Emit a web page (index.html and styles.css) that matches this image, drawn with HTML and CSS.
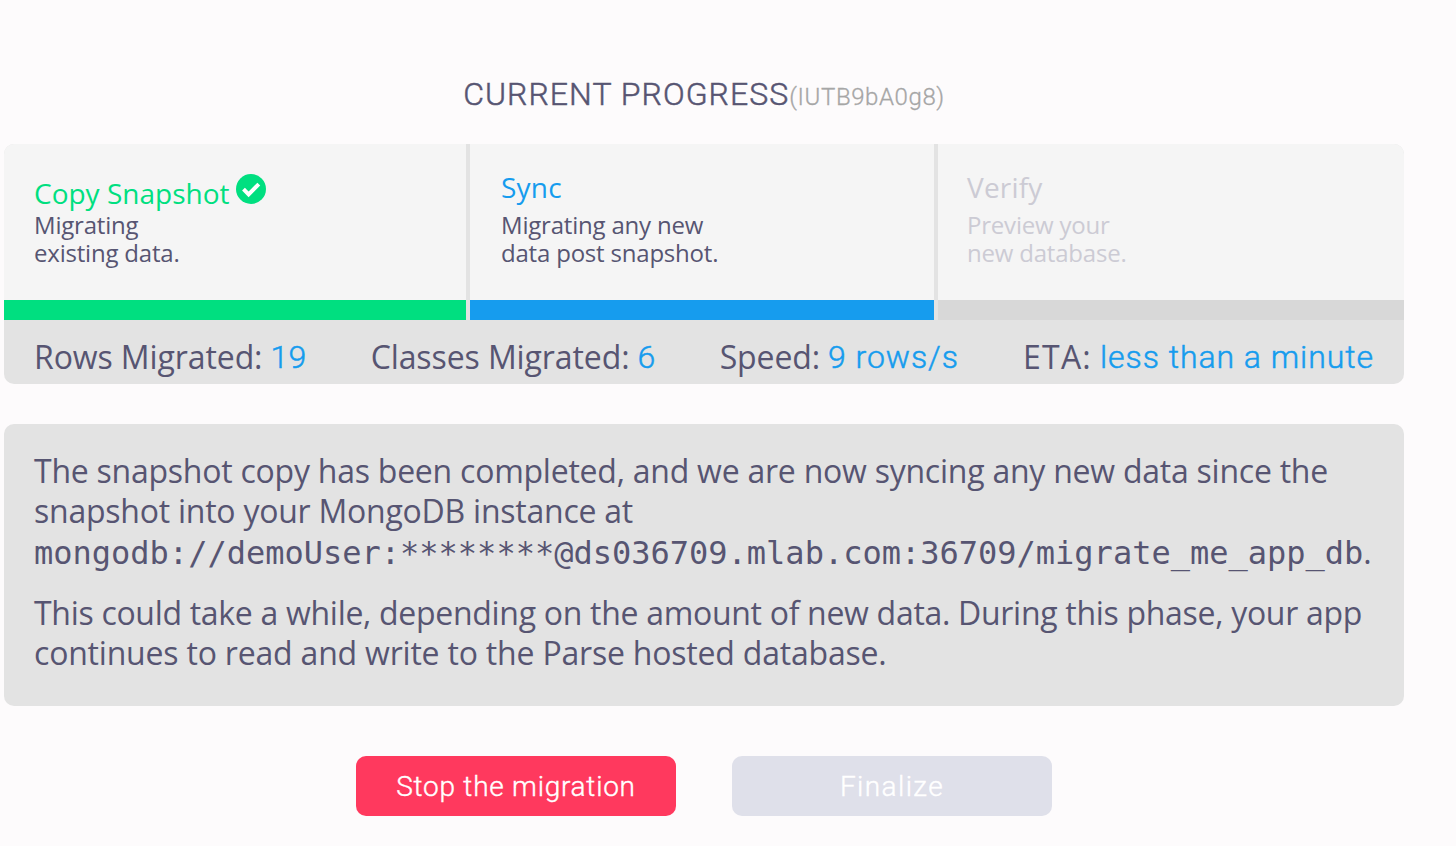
FILE: index.html
```html
<!DOCTYPE html>
<html lang="en">
<head>
<meta charset="utf-8">
<title>Current progress</title>
<link rel="stylesheet" href="styles.css">
</head>
<body>
<main class="page">
  <h1 class="heading"><span class="heading-title">CURRENT PROGRESS</span><span class="heading-id">(IUTB9bA0g8)</span></h1>
  <section class="progress">
    <div class="steps">
      <div class="step done">
        <h2 class="step-title"><span class="copy-title">Copy Snapshot</span><svg class="check" viewBox="0 0 30 30"><circle cx="15" cy="15" r="15"/><path d="M7.5 15.2 L12.6 20.3 L22.8 10.1"/></svg></h2>
        <p class="step-text">Migrating<br>existing data.</p>
      </div>
      <div class="step active">
        <h2 class="step-title">Sync</h2>
        <p class="step-text">Migrating any new<br>data post snapshot.</p>
      </div>
      <div class="step pending">
        <h2 class="step-title">Verify</h2>
        <p class="step-text">Preview your<br>new database.</p>
      </div>
    </div>
    <div class="stats">
      <div class="stat"><span class="label">Rows Migrated:</span><span class="value number">19</span></div>
      <div class="stat"><span class="label">Classes Migrated:</span><span class="value number">6</span></div>
      <div class="stat"><span class="label">Speed:</span><span class="value">9 rows/s</span></div>
      <div class="stat"><span class="label eta">ETA:</span><span class="value">less than a minute</span></div>
    </div>
  </section>
  <section class="message">
    <p class="para first">The snapshot copy has been completed, and we are now syncing any new data since the<br>snapshot into your MongoDB instance at</p>
    <p class="uri"><code class="mono">mongodb://demoUser:********@ds036709.mlab.com:36709/migrate_me_app_db</code>.</p>
    <p class="para"><span class="long-line">This could take a while, depending on the amount of new data. During this phase, your app</span><br>continues to read and write to the Parse hosted database.</p>
  </section>
  <div class="actions">
    <button class="btn stop">Stop the migration</button>
    <button class="btn finalize">Finalize</button>
  </div>
</main>
</body>
</html>
```
FILE: styles.css
```css
* { box-sizing: border-box; }
body { margin: 0; background: #fdfbfc; color: #575572; font-family: "Open Sans", "Noto Sans", sans-serif; font-size: 32px; }
h1, h2, p { margin: 0; font-weight: 400; }
.page { width: 1408px; height: 846px; padding: 70px 4px 0; overflow: hidden; white-space: nowrap; }
.heading { height: 74px; line-height: 49px; text-align: center; font-family: Roboto, sans-serif; font-size: 32px; }
.heading-title { font-weight: 300; letter-spacing: 1.05px; -webkit-text-stroke: 0.5px; }
.heading-id { font-size: 24px; font-weight: 300; color: #a6a6a6; letter-spacing: 0.6px; -webkit-text-stroke: 0.3px; }
.progress { height: 240px; border-radius: 10px; overflow: hidden; background: #e3e3e3; }
.steps { display: grid; grid-template-columns: 462px 464px 466px; gap: 4px; height: 176px; }
.step { background: #f5f5f5; border-bottom: 20px solid #d8d8d8; padding: 30px 30px 0; }
.active { padding-left: 31px; }
.pending { padding-left: 29px; }
.done { border-bottom-color: #00df80; }
.active { border-bottom-color: #169cee; }
.step-title { display: flex; gap: 7px; height: 37px; line-height: 27px; font-size: 28px; letter-spacing: 0.2px; }
.done .step-title { color: #00df80; }
.copy-title { padding-top: 6px; letter-spacing: 0; }
.active .step-title { color: #169cee; }
.pending { color: #cccbd4; }
.check { width: 30px; height: 30px; fill: #00df80; }
.check path { fill: none; stroke: #fff; stroke-width: 4; }
.step-text { font-size: 24px; line-height: 28px; letter-spacing: -0.2px; }
.stats { display: flex; justify-content: space-between; height: 64px; padding: 0 30px; line-height: 73px; }
.stat { display: flex; gap: 8px; }
.label { letter-spacing: -0.1px; }
.eta { letter-spacing: 1.2px; }
.value { font-family: Roboto, sans-serif; font-weight: 300; color: #169cee; letter-spacing: 0.95px; line-height: 75px; -webkit-text-stroke: 0.5px; }
.number { letter-spacing: 0.3px; }
.message { height: 282px; margin-top: 40px; padding: 27px 30px 0; border-radius: 10px; background: #e3e3e3; line-height: 40px; }
.para { letter-spacing: -0.2px; }
.first { letter-spacing: -0.24px; }
.long-line { letter-spacing: -0.3px; }
.uri { height: 62px; line-height: 42px; }
.mono { font-family: "DejaVu Sans Mono", monospace; font-size: 32px; }
.actions { display: flex; justify-content: center; gap: 56px; margin-top: 50px; }
.btn { width: 320px; height: 60px; padding: 2px 0 0; border: 0; border-radius: 10px; color: #fff; font-family: Roboto, sans-serif; font-size: 28px; font-weight: 300; line-height: 58px; letter-spacing: 0.75px; -webkit-text-stroke: 0.4px; }
.stop { background: #ff395e; }
.finalize { background: #dfe0ea; letter-spacing: 1.4px; }
```
